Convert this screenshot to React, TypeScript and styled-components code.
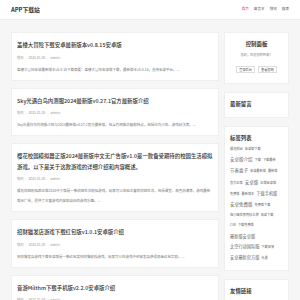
import React from "react";
import styled, { createGlobalStyle } from "styled-components";

const Global = createGlobalStyle`
  html, body { margin: 0; padding: 0; }
  body {
    background: #f6f6f6;
    font-family: "Noto Sans CJK SC", "Noto Sans", sans-serif;
    color: #333;
  }
`;

const Header = styled.header`
  background: #fff;
  height: 19px;
  border-bottom: 1px solid #ececec;
`;

const HeaderInner = styled.div`
  width: 278px;
  height: 100%;
  margin: 0 auto;
  display: flex;
  align-items: center;
  justify-content: space-between;
`;

const Logo = styled.div`
  font-size: 5.8px;
  font-weight: 700;
  color: #333;
  line-height: 1;
  margin-top: 1px;
`;

const Nav = styled.nav`
  display: flex;
  gap: 5px;
  margin-top: -1px;
`;

const NavItem = styled.a<{ $active?: boolean }>`
  font-size: 3.6px;
  line-height: 1;
  color: ${(p) => (p.$active ? "#f0454a" : "#555")};
  text-decoration: none;
`;

const Wrap = styled.div`
  width: 278px;
  margin: 12px auto 0;
  display: flex;
  gap: 5px;
  align-items: flex-start;
`;

const Main = styled.main`
  width: 208px;
  display: flex;
  flex-direction: column;
  gap: 7px;
`;

const Card = styled.article`
  background: #fff;
  border: 1px solid #efefef;
  box-sizing: border-box;
  padding: 7px 5px 5px;
`;

const Title = styled.h2`
  margin: 0;
  font-size: 5.4px;
  line-height: 10.5px;
  font-weight: 500;
  color: #333;
`;

const Meta = styled.div`
  margin-top: 4px;
  font-size: 3.3px;
  line-height: 6px;
  color: #999;
  display: flex;
  gap: 2px;
`;

const Sep = styled.span`
  color: #ccc;
`;

const Desc = styled.p`
  margin: 4px 0 0;
  font-size: 3.5px;
  line-height: 10px;
  color: #777;
`;

const Side = styled.aside`
  width: 65px;
  display: flex;
  flex-direction: column;
  gap: 8px;
`;

const Box = styled.section<{ $center?: boolean }>`
  background: #fff;
  border: 1px solid #efefef;
  box-sizing: border-box;
  padding: 6px 5px 7px;
  text-align: ${(p) => (p.$center ? "center" : "left")};
`;

const BoxTitle = styled.h3`
  margin: 0;
  font-size: 5.4px;
  line-height: 11px;
  font-weight: 700;
  color: #333;
`;

const Welcome = styled.div`
  margin-top: 2px;
  font-size: 3.2px;
  line-height: 6px;
  color: #888;
`;

const Buttons = styled.div`
  margin-top: 8px;
  margin-bottom: 3px;
  display: flex;
  justify-content: center;
  gap: 3px;
`;

const Btn = styled.a`
  display: flex;
  align-items: center;
  height: 7px;
  padding: 0 2px;
  border: 1px solid #ddd;
  box-sizing: border-box;
  font-size: 3.2px;
  color: #555;
  text-decoration: none;
`;

const Tags = styled.div`
  display: flex;
  flex-wrap: wrap;
  column-gap: 2px;
  width: 49px;
  align-items: baseline;
`;

const sizes = { s: 3.2, m: 4.2, l: 4.5 };

const Tag = styled.a<{ $size: "s" | "m" | "l" }>`
  font-size: ${(p) => sizes[p.$size]}px;
  line-height: 10.2px;
  color: #666;
  text-decoration: none;
  white-space: nowrap;
`;

const Links = styled.div`
  margin-top: 3px;
  display: flex;
  gap: 2px;
  font-size: 3.2px;
  line-height: 6px;
  color: #888;
`;

type Post = {
  title: string;
  desc: string;
};

const posts: Post[] = [
  {
    title: "盖楼大冒险下载安卓最新版本v0.8.15安卓版",
    desc: "盖楼大冒险安卓最新版本v0.8.15下载摘要：盖楼大冒险安卓版下载，最新版本v0.8.15，支持安卓平台。...",
  },
  {
    title: "Sky光遇白鸟内测服2024最新版v0.27.1官方最新版介绍",
    desc: "Sky光遇白鸟内测服介绍与2024最新版v0.27.1官方最新版，包含内测服功能和特点，包括白鸟介绍、游戏玩法等。...",
  },
  {
    title:
      "樱花校园模拟器正版2024最新版中文无广告版v1.0是一款备受期待的校园生活模拟游戏。以下是关于这款游戏的详细介绍和内容概述。",
    desc: "樱花校园模拟器正版2024中文版是一款校园生活模拟游戏，玩家可以体验丰富的校园生活，包括课堂、角色扮演等，游戏最新版无广告，提供了丰富游戏内容和自由的游戏乐趣。...",
  },
  {
    title: "招财猫发店游戏下载红包版v1.0.1安卓版介绍",
    desc: "招财猫发店游戏下载安卓版是一款红包类招财猫模拟游戏，玩家可以在游戏中经营发店获得现金红包奖励。...",
  },
  {
    title: "音游Milthm下载手机版v2.2.0安卓版介绍",
    desc: "音游Milthm下载手机版是一款节奏音乐游戏，玩家可以体验丰富的曲目和精美的画面。...",
  },
];

const tags: { t: string; s: "s" | "m" | "l" }[] = [
  { t: "樱花校园", s: "s" },
  { t: "安卓版下载", s: "s" },
  { t: "安卓版介绍", s: "l" },
  { t: "下载", s: "s" },
  { t: "下载最新", s: "s" },
  { t: "节奏盒子", s: "l" },
  { t: "安卓最新版", s: "s" },
  { t: "最新版", s: "s" },
  { t: "官方正版", s: "s" },
  { t: "安卓版", s: "l" },
  { t: "正版安卓版", s: "s" },
  { t: "免费版", s: "s" },
  { t: "最新版本", s: "s" },
  { t: "下载手机版", s: "m" },
  { t: "安卓免费版", s: "l" },
  { t: "免费版下载", s: "s" },
  { t: "电小喵世界奇妙之旅", s: "s" },
  { t: "安卓下载", s: "s" },
  { t: "CSR", s: "s" },
  { t: "下载免费版", s: "s" },
  { t: "最新版安卓版", s: "m" },
  { t: "太空行动国际服", s: "m" },
  { t: "下载安装", s: "s" },
  { t: "安卓最新官方版", s: "m" },
  { t: "光遇", s: "s" },
];

export default function App() {
  return (
    <>
      <Global />
      <Header>
        <HeaderInner>
          <Logo>APP下载站</Logo>
          <Nav>
            <NavItem $active>首页</NavItem>
            <NavItem>留言本</NavItem>
            <NavItem>快讯</NavItem>
            <NavItem>搜索</NavItem>
          </Nav>
        </HeaderInner>
      </Header>
      <Wrap>
        <Main>
          {posts.map((p) => (
            <Card key={p.title}>
              <Title>{p.title}</Title>
              <Meta>
                <span>快讯</span>
                <Sep>|</Sep>
                <span>2025-01-05</span>
                <Sep>|</Sep>
                <span>admin</span>
              </Meta>
              <Desc>{p.desc}</Desc>
            </Card>
          ))}
        </Main>
        <Side>
          <Box $center>
            <BoxTitle>控制面板</BoxTitle>
            <Welcome>您好，欢迎您的到来！</Welcome>
            <Buttons>
              <Btn>登录后台</Btn>
              <Btn>查看官网</Btn>
            </Buttons>
          </Box>
          <Box>
            <BoxTitle>最新留言</BoxTitle>
          </Box>
          <Box>
            <BoxTitle>标签列表</BoxTitle>
            <Tags>
              {tags.map((t) => (
                <Tag key={t.t} $size={t.s}>
                  {t.t}
                </Tag>
              ))}
            </Tags>
          </Box>
          <Box>
            <BoxTitle>友情链接</BoxTitle>
            <Links>
              <span>Z-Blog on Git</span>
              <span>Z-BlogPHP</span>
            </Links>
          </Box>
        </Side>
      </Wrap>
    </>
  );
}
